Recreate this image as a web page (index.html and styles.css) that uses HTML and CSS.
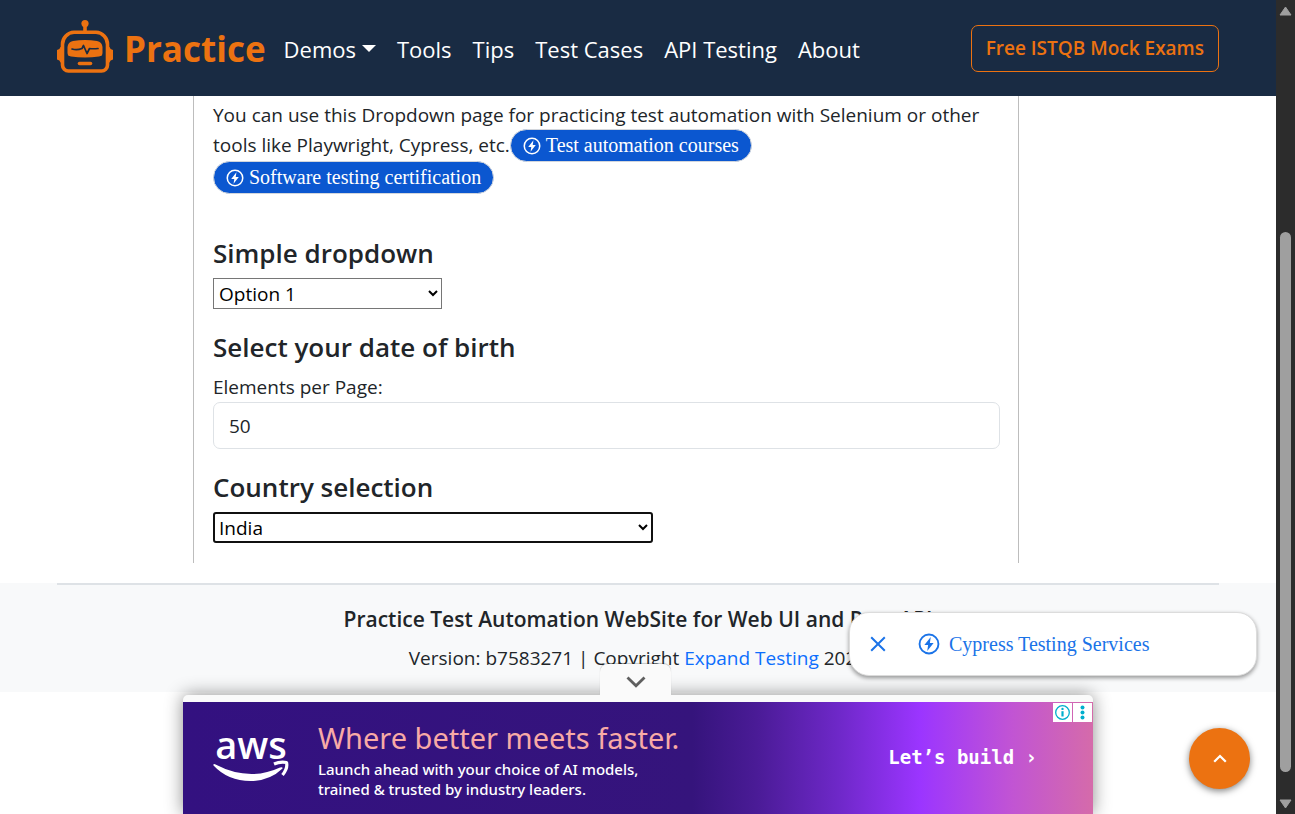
FILE: index.html
```html
<!DOCTYPE html>
<html lang="en">
<head>
<meta charset="utf-8">
<meta name="viewport" content="width=device-width, initial-scale=1">
<title>Practice - Dropdown</title>
<link rel="stylesheet" href="styles.css">
</head>
<body>
<svg class="defs" aria-hidden="true">
  <symbol id="bolt" viewBox="0 0 20 20">
    <circle cx="10" cy="10" r="8.6" fill="none" stroke="currentColor" stroke-width="1.7"/>
    <path d="M11.6 3.6 5.8 11h3.4l-.8 5.4L14.2 9h-3.4z" fill="currentColor"/>
  </symbol>
</svg>
<div class="window">
  <div class="page">
    <header class="navbar">
      <a class="brand" href="#">
        <svg class="robot" viewBox="0 0 56 54" aria-hidden="true">
          <g fill="none" stroke="#ec7211" stroke-width="3.6">
            <path d="M28 4v8"/>
            <path d="M17 12.300h22a12 12 0 0 1 11.500 12V45a6 6 0 0 1-6 6h-33a6 6 0 0 1-6-6V24.300a12 12 0 0 1 11.500-12z"/>
            <path d="M22.500 43.500h11" stroke-linecap="round"/>
          </g>
          <g fill="#ec7211">
            <circle cx="28" cy="3.600" r="3.600"/>
            <path d="M5 27v15.500H3.500Q3 40 0 39.500V30q3-.5 3.500-3zM51 27v15.500h1.500q.5-2.500 3.500-3V30q-3-.5-3.500-3z"/>
            <path d="M16 21q12-2 24 0 5 1 5.500 6v6q0 3-3.500 3.500-14 2-28 0-3.500-.5-3.500-3.500v-6Q11 22 16 21z"/>
          </g>
          <path d="M15 29q5 1.500 10-.5l1.500-3 3.500 8 2.500-5q4 .5 8.500 0" fill="none" stroke="#192b43" stroke-width="1.700" stroke-linecap="round" stroke-linejoin="round"/>
        </svg>
        <span>Practice</span>
      </a>
      <nav class="links">
        <a class="has-menu" href="#">Demos</a>
        <a href="#">Tools</a>
        <a href="#">Tips</a>
        <a href="#">Test Cases</a>
        <a href="#">API Testing</a>
        <a href="#">About</a>
      </nav>
      <a class="exam" href="#">Free ISTQB Mock Exams</a>
    </header>

    <main class="container">
      <section class="content">
        <p class="intro">You can use this Dropdown page for practicing test automation with Selenium or other tools like Playwright, Cypress, etc.<a class="chip" href="#"><svg aria-hidden="true"><use href="#bolt"/></svg>Test automation courses</a> <a class="chip" href="#"><svg aria-hidden="true"><use href="#bolt"/></svg>Software testing certification</a></p>
        <h2><label for="simple">Simple dropdown</label></h2>
        <select class="native short" id="simple"><option>Option 1</option><option>Option 2</option></select>
        <h2>Select your date of birth</h2>
        <label class="caption" for="per-page">Elements per Page:</label>
        <select class="field" id="per-page"><option>10</option><option>20</option><option selected>50</option><option>100</option></select>
        <h2><label for="country">Country selection</label></h2>
        <select class="native long" id="country"><option>India</option><option>France</option></select>
      </section>
    </main>

    <footer class="footer">
      <div class="footer-inner">
        <h3>Practice Test Automation WebSite for Web UI and Rest API</h3>
        <p>Version: b7583271 | Copyright <a href="#">Expand Testing</a> 2025</p>
      </div>
    </footer>

    <aside class="suggest">
      <button class="close" aria-label="Close"><svg viewBox="0 0 16 16" aria-hidden="true"><path d="M1.200 1.200l13.600 13.600M14.800 1.200 1.200 14.800" fill="none" stroke="#1a73e8" stroke-width="2"/></svg></button>
      <a href="#"><svg aria-hidden="true"><use href="#bolt"/></svg>Cypress Testing Services</a>
    </aside>

    <aside class="anchor-ad">
      <button class="collapse" aria-label="Collapse"><svg viewBox="0 0 20 12" aria-hidden="true"><path d="M1.500 1.500 10 9.800l8.500-8.300" fill="none" stroke="#5f5f5f" stroke-width="2.800"/></svg></button>
      <div class="ad">
        <svg class="aws" viewBox="0 0 76 50" role="img" aria-label="aws">
          <text x="38" y="26" text-anchor="middle">aws</text>
          <path d="M.5 32.500q-.5-2 1.500-1.200Q36 49 67 34.500q3-1 2.500 1-13 12.500-32 12.500Q15 48 .5 32.500z" fill="#fff"/>
          <path d="M61 31q6-2.600 12.500-1.500 1.500 6-4 12.500" fill="none" stroke="#fff" stroke-width="3.200" stroke-linejoin="round"/>
        </svg>
        <div class="copy">
          <strong>Where better meets faster.</strong>
          <p>Launch ahead with your choice of AI models,<br>trained &amp; trusted by industry leaders.</p>
        </div>
        <a class="cta" href="#">Let’s build ›</a>
        <div class="choices">
          <button aria-label="Ad information"><svg viewBox="0 0 19 19" aria-hidden="true"><circle cx="9.500" cy="9.500" r="6.800" fill="none" stroke="#00aecd" stroke-width="1.300"/><circle cx="9.500" cy="5.900" r="1.200" fill="#00aecd"/><path d="M9.500 8.200v5.300" stroke="#00aecd" stroke-width="2.200"/></svg></button>
          <button aria-label="Ad options"><svg viewBox="0 0 19 19" aria-hidden="true"><g fill="#00aecd"><circle cx="9.500" cy="4.400" r="2"/><circle cx="9.500" cy="9.500" r="2"/><circle cx="9.500" cy="14.600" r="2"/></g></svg></button>
        </div>
      </div>
    </aside>

    <button class="to-top" aria-label="Back to top"><svg viewBox="0 0 14 9" aria-hidden="true"><path d="M1.200 7.700 7 2l5.800 5.700" fill="none" stroke="#fff" stroke-width="2.300"/></svg></button>
  </div>

  <div class="scrollbar" aria-hidden="true">
    <svg viewBox="0 0 13 10"><path d="M6.500 1 12 9H1z" fill="#9f9f9f" stroke="#9f9f9f" stroke-linejoin="round"/></svg>
    <div class="track"><div class="thumb"></div></div>
    <svg viewBox="0 0 13 10"><path d="M6.500 9 12 1H1z" fill="#9f9f9f" stroke="#9f9f9f" stroke-linejoin="round"/></svg>
  </div>
</div>
</body>
</html>
```
FILE: styles.css
```css
*, *::before, *::after { box-sizing: border-box; }

body {
  margin: 0;
  font-family: "Open Sans", "Noto Sans", sans-serif;
  font-size: 19px;
  line-height: 30px;
  color: #212529;
  background: #fff;
}

a { color: #0d6efd; text-decoration: none; }
button { border: 0; padding: 0; background: none; cursor: pointer; }
svg { display: block; flex: none; }
h2, h3, p { margin: 0; }

.defs { position: absolute; width: 0; height: 0; }

.window { display: flex; height: 100vh; overflow: hidden; }
.page { position: relative; flex: 1; min-width: 0; overflow: hidden; }

.navbar {
  display: flex;
  align-items: center;
  height: 96px;
  padding: 1px 57px 0;
  background: #192b43;
}
.brand {
  display: flex;
  align-items: center;
  gap: 11px;
  margin-right: 18px;
  color: #ec7211;
  font-size: 35px;
  font-weight: 700;
}
.robot { width: 56px; height: 54px; margin-bottom: 3px; }
.links { display: flex; gap: 21px; font-size: 22px; }
.links a { color: #fff; white-space: nowrap; }
.has-menu { display: flex; align-items: center; gap: 6px; }
.has-menu::after {
  content: "";
  border: 7px solid transparent;
  border-top-color: #fff;
  border-bottom: 0;
}
.exam {
  margin-left: auto;
  padding: 8px 14px;
  border: 1px solid #ec7211;
  border-radius: 7px;
  color: #ec7211;
  font-weight: 600;
  line-height: 29px;
  white-space: nowrap;
}

.container {
  display: grid;
  grid-template-columns: 136px minmax(0, 1fr) 200px;
  padding: 0 57px;
}
.content {
  grid-column: 2;
  padding: 4px 18px 20px 19px;
  border: solid #bdbdbd;
  border-width: 0 1px;
}
.intro { margin-bottom: 42px; }
.chip {
  display: inline-block;
  margin-top: -1px;
  padding: 0 12px;
  border: 1px solid #d2d6dc;
  border-radius: 17px;
  background: #0b57d0;
  color: #fff;
  font-family: "Liberation Serif", serif;
  font-size: 20px;
  line-height: 31px;
}
.chip svg {
  display: inline-block;
  width: 18px;
  height: 18px;
  margin-right: 5px;
  vertical-align: -3px;
}

h2 { font-size: 26px; font-weight: 600; line-height: 34px; margin-bottom: 8px; }
select { display: block; font-family: inherit; font-size: 19px; color: #000; background: #fff; }
.native { height: 31px; border: 1px solid #767676; border-radius: 0; padding: 0 1px; margin-bottom: 21px; }
.short { width: 229px; }
.long { width: 440px; margin-bottom: 0; border: 2px solid #101010; border-radius: 3px; padding: 0; }
.caption { display: block; }
.field {
  appearance: none;
  width: 100%;
  height: 47px;
  margin-bottom: 21px;
  padding: 0 15px;
  border: 1px solid #dee2e6;
  border-radius: 7px;
  color: #212529;
}

.footer { margin-top: 20px; padding: 0 57px; background: #f8f9fa; }
.footer-inner {
  padding: 19px 0;
  border-top: 2px solid #dee2e6;
  text-align: center;
}
h3 { font-size: 21px; font-weight: 600; line-height: 30px; margin-bottom: 9px; }

.suggest {
  position: absolute;
  right: 19px;
  bottom: 138px;
  display: flex;
  align-items: center;
  gap: 32px;
  width: 408px;
  height: 64px;
  padding: 0 20px;
  border: 1px solid #dcdcdc;
  border-radius: 20px;
  background: #fff;
  box-shadow: 0 2px 4px rgba(0, 0, 0, .4);
}
.close svg { width: 16px; height: 16px; }
.suggest a {
  display: flex;
  align-items: center;
  gap: 9px;
  color: #1a73e8;
  font-family: "Liberation Serif", serif;
  font-size: 20px;
}
.suggest a svg { width: 22px; height: 22px; }

.anchor-ad {
  position: absolute;
  bottom: 0;
  left: 50%;
  width: 910px;
  margin-left: -455px;
  padding-top: 7px;
  border-radius: 5px 5px 0 0;
  background: #fafafa;
  box-shadow: 0 0 18px rgba(0, 0, 0, .45);
}
.collapse {
  position: absolute;
  bottom: 100%;
  left: 417px;
  display: grid;
  place-items: center;
  width: 71px;
  height: 31px;
  padding-top: 5px;
  border-radius: 8px 8px 0 0;
  background: #fafafa;
  box-shadow: 0 -1px 1px rgba(0, 0, 0, .2);
}
.collapse svg { width: 20px; height: 12px; }
.ad {
  position: relative;
  display: flex;
  align-items: center;
  height: 112px;
  padding: 0 56px 0 30px;
  background: linear-gradient(90deg, #331180 0%, #35147c 56%, #4a1b96 63%, #6e28c8 72%, #9b35ff 81%, #c154d4 91%, #d56baa 100%);
  color: #fff;
}
.aws { width: 76px; height: 50px; overflow: visible; }
.aws text { font: 600 38px "Open Sans", sans-serif; fill: #fff; }
.copy { margin-left: 29px; }
.copy strong {
  display: block;
  color: #f8aaa6;
  font: 400 29px/42px "Noto Sans", sans-serif;
}
.copy p { font: 500 15px/20px "Noto Sans", sans-serif; }
.cta {
  margin: 0 0 2px auto;
  color: #fff;
  font: 700 19px/24px "DejaVu Sans Mono", monospace;
}
.choices { position: absolute; top: 1px; right: 1px; display: flex; gap: 1px; }
.choices button { background: #fff; }
.choices svg { width: 19px; height: 19px; }

.to-top {
  position: absolute;
  right: 26px;
  bottom: 25px;
  display: grid;
  place-items: center;
  width: 61px;
  height: 61px;
  border-radius: 50%;
  background: #ec7211;
  box-shadow: 0 2px 7px rgba(0, 0, 0, .5);
}
.to-top svg { width: 14px; height: 9px; }

.scrollbar {
  display: flex;
  flex-direction: column;
  align-items: center;
  gap: 6px;
  width: 19px;
  padding: 6px 0 5px;
  background: #2c2c2c;
}
.scrollbar svg { width: 13px; height: 10px; }
.track { flex: 1; display: flex; flex-direction: column; justify-content: flex-end; padding-bottom: 21px; }
.thumb { width: 11px; height: 72%; border-radius: 6px; background: #9f9f9f; }
```
